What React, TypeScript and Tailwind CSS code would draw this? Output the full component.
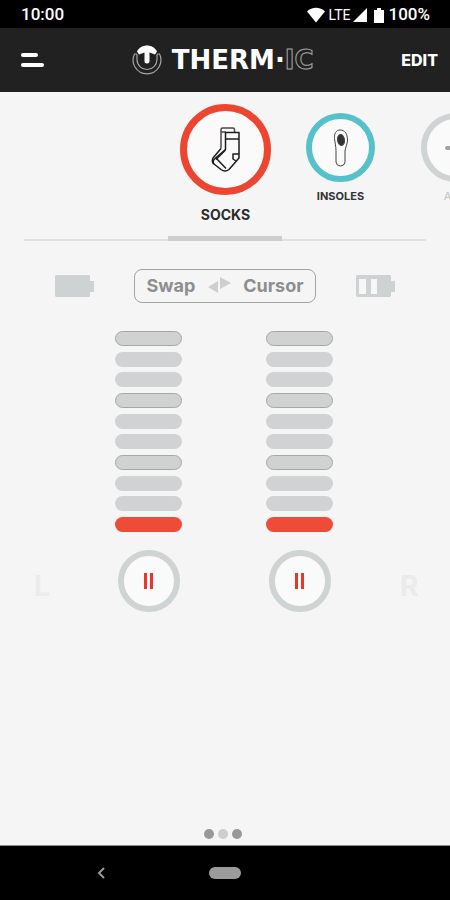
import { useState } from "react";

function StatusIcons() {
  return (
    <div className="flex items-center">
      <svg className="w-[18px] h-4" viewBox="0 0 18 16" fill="white" aria-hidden="true">
        <path d="M0 4.500C5-.5 13-.5 18 4.500L9 15.500z" />
      </svg>
      <span className="ml-1 text-sm">LTE</span>
      <svg className="ml-[3px] w-[14px] h-[14px]" viewBox="0 0 14 14" fill="white" aria-hidden="true">
        <path d="M14 0v14H0z" />
      </svg>
      <svg className="ml-[7px] w-[10px] h-[15px]" viewBox="0 0 10 15" fill="white" aria-hidden="true">
        <path d="M3 0h4v2h3v13H0V2h3z" />
      </svg>
      <span className="ml-1 text-[17px] font-medium">100%</span>
    </div>
  );
}

function LogoMark() {
  return (
    <svg className="w-[30px] h-[30px]" viewBox="0 0 30 30" fill="none" aria-hidden="true">
      <path d="M2.500 9h2l.5 1v4.500a10 10 0 0 0 20 0V10l.5-1h2c2 4 1.500 9.500-.5 13a14 14 0 0 1-24 0C.5 18.500.5 13 2.500 9z" stroke="#a5a5a5" strokeWidth="1.200" />
      <path d="M5 6.500C9-1.500 21-1.500 25 6.500L23 9.500l-5.500-2V16a2.500 2.500 0 0 1-5 0V7.500L7 9.500z" fill="white" />
    </svg>
  );
}

function SocksIcon() {
  return (
    <svg className="w-[30px] h-[45px]" viewBox="0 0 30 45" fill="none" stroke="#1c1c1c" strokeWidth="1.500" strokeLinejoin="round" aria-hidden="true">
      <path d="M10 21.500V2.500Q10 1 11.500 1H22q1.500 0 1.500 1.500V5M10 5h5" stroke="#4a4a4a" />
      <path d="M10 21.500 2 31q-1.500 3.500.5 6M14.500 23 5 32.500" />
      <path d="M14.500 5.500h13.500V31L18 42.500q-4 3-8 0L3 37q-2-3 1-5.500l10.500-9z" />
      <path d="M14.500 12h13.500M28 27h-6v5l3 2M5 31l10 10.500" />
    </svg>
  );
}

function InsoleIcon() {
  return (
    <svg className="w-4 h-[38px]" viewBox="0 0 16 38" fill="none" stroke="#444" strokeWidth="1" aria-hidden="true">
      <path d="M7 1C3 1 1 5 1.500 9.500c.5 5 1.500 8 1.500 12V33q.5 4 4.500 4t4.500-4V22c.5-4 2.500-7 2.500-11C14.500 5 12 1 7 1z" />
      <ellipse cx="8" cy="11" rx="3.500" ry="5.500" fill="#333" transform="rotate(-8 8 11)" />
    </svg>
  );
}

function Battery({ low }: { low?: boolean }) {
  return (
    <svg className="w-[41px] h-[23px]" viewBox="0 0 41 23" role="img" aria-label={low ? "Battery low" : "Battery full"}>
      <path d="M2 0h33l1 1v5h4v11h-4v4l-1 1H2l-1-1V1z" fill="#cfd2d3" />
      {low && <path d="M4 4h7v15H4zM16 4h6v15h-6z" fill="#f7f7f7" />}
    </svg>
  );
}

function HeatColumn({ name, level, onChange }: {
  name: string;
  level: number;
  onChange: (n: number) => void;
}) {
  const [running, setRunning] = useState(true);
  return (
    <div className="flex flex-col items-center">
      <div className="flex flex-col justify-between w-[67px] h-[201px]">
        {[10, 9, 8, 7, 6, 5, 4, 3, 2, 1].map(n => (
          <button
            key={n}
            onClick={() => onChange(n)}
            aria-label={`${name} level ${n}`}
            className={`h-[15px] rounded-full ${
              n <= level
                ? "bg-[#ee4c38]"
                : n === 10 || n === 7 || n === 4
                  ? "bg-[#cfd2d1] border border-[#a6a8a8]"
                  : "bg-[#d0d2d4]"
            }`}
          />
        ))}
      </div>
      <button
        onClick={() => setRunning(r => !r)}
        aria-label={running ? `Pause ${name}` : `Start ${name}`}
        className="mt-[18px] w-[62px] h-[62px] rounded-full border-6 border-[#d0d3d3] bg-[#fafafa] flex items-center justify-center"
      >
        <svg className="w-[10px] h-4" viewBox="0 0 10 16" fill="#e5372b" aria-hidden="true">
          {running ? <path d="M0 0h3v16H0zM6 0h3v16H6z" /> : <path d="M0 0l10 8-10 8z" />}
        </svg>
      </button>
    </div>
  );
}

export default function App() {
  const [left, setLeft] = useState(1);
  const [right, setRight] = useState(1);

  return (
    <div className="min-h-screen flex flex-col overflow-hidden bg-[#f5f5f5] font-['Inter',sans-serif]">
      <div className="h-7 shrink-0 bg-black text-white pl-[21px] pr-5 pt-[2px] flex items-center justify-between font-['Roboto',sans-serif]">
        <span className="text-[17px] font-medium">10:00</span>
        <StatusIcons />
      </div>

      <header className="h-16 shrink-0 bg-[#212121] text-white pl-[21px] pr-3 flex items-center justify-between">
        <button aria-label="Menu" className="w-[23px] flex flex-col gap-[6px]">
          <span className="w-[17px] h-1 rounded-sm bg-white" />
          <span className="w-[23px] h-1 rounded-sm bg-white" />
        </button>
        <div className="flex items-center gap-[10px]">
          <LogoMark />
          <span className="text-[26px] leading-none font-bold font-['DejaVu_Sans',sans-serif]">
            THERM·<span className="text-[#212121] [-webkit-text-stroke:1px_#a5a5a5]">IC</span>
          </span>
        </div>
        <button className="text-base font-extrabold">EDIT</button>
      </header>

      <nav className="pt-3">
        <div className="pl-[calc(50%-57px)] flex">
          <button className="w-[115px] h-[132px] shrink-0 flex flex-col items-center">
            <span className="w-[91px] h-[91px] rounded-full border-7 border-[#ec4531] bg-[#fafafa] flex items-center justify-center">
              <SocksIcon />
            </span>
            <span className="mt-[10px] text-sm font-bold text-[#2b2b2b]">SOCKS</span>
          </button>
          <button className="w-[115px] shrink-0 pt-[9px] flex flex-col items-center">
            <span className="w-[69px] h-[69px] rounded-full border-6 border-[#56c1ca] bg-[#fafafa] flex items-center justify-center">
              <InsoleIcon />
            </span>
            <span className="mt-[6px] text-[11px] leading-4 font-bold text-[#333]">INSOLES</span>
          </button>
          <button className="w-[115px] shrink-0 pt-[9px] flex flex-col items-center">
            <span className="w-[69px] h-[69px] rounded-full border-6 border-[#d0d3d3] bg-[#fafafa] flex items-center justify-center">
              <svg className="w-[22px] h-[22px]" viewBox="0 0 22 22" stroke="#a3a3a3" strokeWidth="4" strokeLinecap="round" aria-hidden="true">
                <path d="M2 11h18M11 2v18" />
              </svg>
            </span>
            <span className="mt-[6px] text-[11px] leading-4 font-medium text-[#c9c9c9]">ADD</span>
          </button>
        </div>
        <div className="mx-6 h-[5px] border-b-2 border-[#e0e0e0]">
          <div className="mx-auto w-[114px] h-[5px] bg-[#cccecd]" />
        </div>
      </nav>

      <main className="flex-1 flex flex-col">
        <div className="mt-7 px-[54px] flex items-center justify-between">
          <Battery />
          <button className="h-[34px] px-[11px] rounded-lg border border-[#a2a3a3] flex items-center gap-3 text-lg font-bold text-[#8e8e8e]">
            Swap
            <svg className="w-6 h-[18px]" viewBox="0 0 24 18" fill="#cdcfcf" aria-hidden="true">
              <path d="M1 10l10-6v12zM13 0l11 6-11 6z" />
            </svg>
            Cursor
          </button>
          <Battery low />
        </div>

        <div className="mt-7 pl-[34px] pr-[30px] flex items-end justify-between">
          <span className="pb-[5px] w-[14px] text-[28px] font-bold text-[#ebebeb]">L</span>
          <div className="flex gap-[84px]">
            <HeatColumn name="Left" level={left} onChange={setLeft} />
            <HeatColumn name="Right" level={right} onChange={setRight} />
          </div>
          <span className="pb-[5px] w-5 text-[28px] font-bold text-[#ebebeb]">R</span>
        </div>

        <div className="mt-auto pb-[6px] pr-1 flex justify-center gap-1">
          <span className="w-[10px] h-[10px] rounded-full bg-[#989898]" />
          <span className="w-[10px] h-[10px] rounded-full bg-[#cecece]" />
          <span className="w-[10px] h-[10px] rounded-full bg-[#989898]" />
        </div>
      </main>

      <div className="h-[55px] shrink-0 bg-black border-t border-[#8a8a8a] grid grid-cols-[1fr_auto_1fr] items-center">
        <button aria-label="Back" className="justify-self-center mr-2">
          <svg className="w-2 h-3" viewBox="0 0 8 12" fill="none" stroke="#9a9a9a" strokeWidth="2" aria-hidden="true">
            <path d="M7 1L2 6l5 5" />
          </svg>
        </button>
        <button aria-label="Home" className="w-8 h-3 rounded-full bg-[#9c9c9c]" />
      </div>
    </div>
  );
}
